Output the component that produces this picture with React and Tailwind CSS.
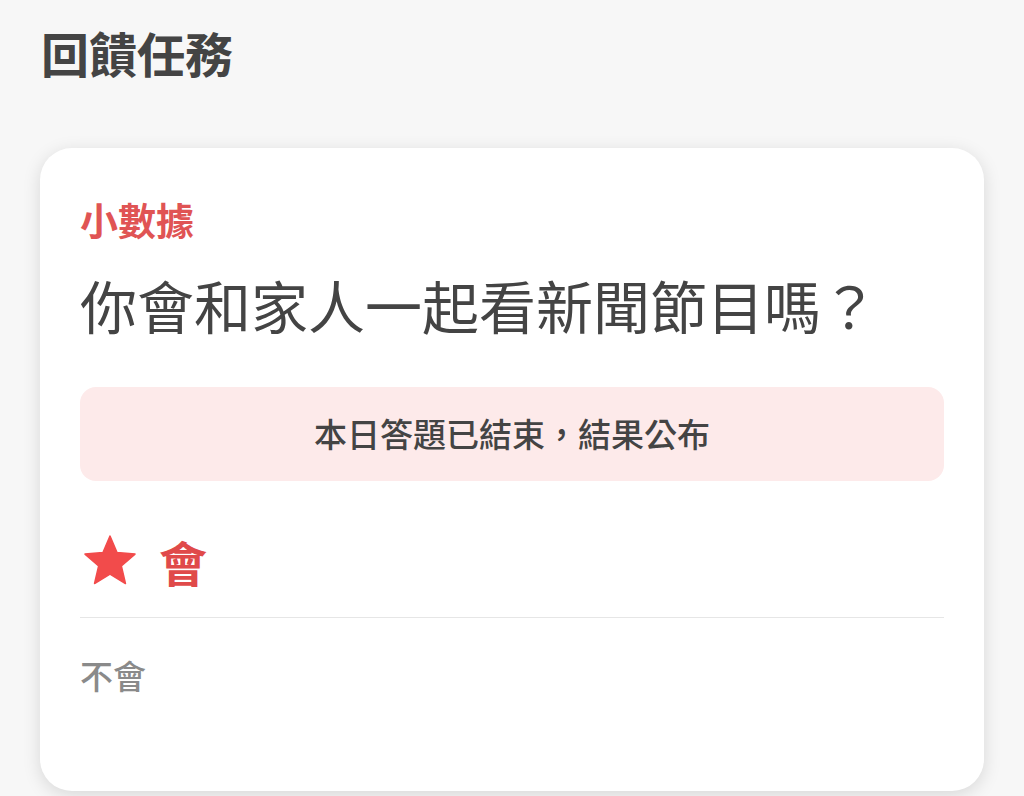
import React from "react";

const Star = () => (
  <svg viewBox="0 0 24 24" className="w-[60px] h-[60px] shrink-0" fill="#f24b4b">
    <path
      d="M12 17.27L18.18 21l-1.64-7.03L22 9.24l-7.19-.61L12 2 9.19 8.63 2 9.24l5.46 4.73L5.82 21z"
      stroke="#f24b4b"
      strokeWidth="0.6"
      strokeLinejoin="round"
    />
  </svg>
);

const App = () => {
  return (
    <div
      className="min-h-[796px] bg-[#f7f7f7] text-[#444444]"
      style={{ fontFamily: '"Noto Sans CJK TC", "Noto Sans", sans-serif' }}
    >
      {/* page title */}
      <div className="px-[41px] pt-[28px] text-[48px] leading-none font-bold">回饋任務</div>

      <div className="px-[40px] pt-[72px]">
        <div className="bg-white rounded-[32px] shadow-[0_4px_18px_rgba(0,0,0,0.13)] px-[40px] pt-[52px] pb-[99px]">
          <div className="text-[38px] leading-none font-bold text-[#e05454]">小數據</div>
          <div className="mt-[38px] text-[57px] leading-none">你會和家人一起看新聞節目嗎？</div>

          <div className="mt-[54px] h-[94px] rounded-[16px] bg-[#fdeaea] flex items-center justify-center text-[33px] font-medium">
            本日答題已結束，結果公布
          </div>

          {/* selected answer */}
          <div className="mt-[50px] flex items-center gap-[19px] h-[60px]">
            <Star />
            <span className="text-[48px] leading-none font-bold text-[#e04a4a]">會</span>
          </div>

          <div className="mt-[26px] border-t border-[#e6e6e6]"></div>

          <div className="mt-[41px] text-[33px] leading-none font-medium text-[#8a8a8a]">不會</div>
        </div>
      </div>
    </div>
  );
};

export default App;
